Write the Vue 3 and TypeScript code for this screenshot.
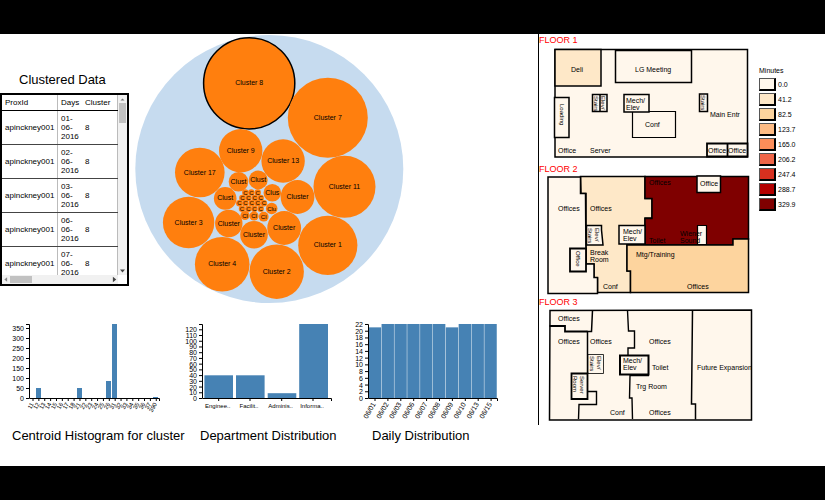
<script setup lang="ts">
interface Bubble { x: number; y: number; r: number; label: string; active?: boolean }
interface Tick { at: number; label: string }
interface Bar { x: number; y: number; w: number }
interface Chart {
  title: string
  key: string
  box: string
  x0: number
  x1: number
  yTicks: Tick[]
  xTicks: Tick[]
  bars: Bar[]
  tilt: boolean
}
interface Shape { d: string; fill: string; w: number }
interface Label { x: number; y: number; text: string; vertical?: boolean }
interface Floor { name: string; box: string; shapes: Shape[]; labels: Label[] }

const days = ['01', '02', '03', '06', '07']

const bubbles: Bubble[] = [
  { x: 249.2, y: 83.3, r: 45.6, label: 'Cluster 8', active: true },
  { x: 327.8, y: 117.8, r: 40, label: 'Cluster 7' },
  { x: 240.7, y: 150.7, r: 21.7, label: 'Cluster 9' },
  { x: 283.1, y: 161, r: 21.7, label: 'Cluster 13' },
  { x: 199.8, y: 172.5, r: 24.8, label: 'Cluster 17' },
  { x: 344.5, y: 186.8, r: 31, label: 'Cluster 11' },
  { x: 327.8, y: 245.3, r: 29.6, label: 'Cluster 1' },
  { x: 276.7, y: 271.7, r: 27.2, label: 'Cluster 2' },
  { x: 222.2, y: 264.3, r: 27.3, label: 'Cluster 4' },
  { x: 188.6, y: 222.5, r: 25.7, label: 'Cluster 3' },
  { x: 225.2, y: 198.4, r: 11.3, label: 'Clust' },
  { x: 238.5, y: 181.8, r: 9.8, label: 'Clust' },
  { x: 258.2, y: 179.9, r: 9.5, label: 'Clust' },
  { x: 272.3, y: 192.8, r: 8.8, label: 'Clus' },
  { x: 297.5, y: 197, r: 16.9, label: 'Cluster' },
  { x: 284.2, y: 228, r: 16.9, label: 'Cluster' },
  { x: 254, y: 234.8, r: 13.8, label: 'Cluster' },
  { x: 228.8, y: 223.5, r: 13.7, label: 'Cluster' },
  { x: 271.7, y: 208.5, r: 5.8, label: 'Clu' },
  { x: 245, y: 215.5, r: 4.6, label: 'Cl' },
  { x: 254, y: 216, r: 4.6, label: 'Cl' },
  { x: 263.7, y: 216.7, r: 4.9, label: 'Cl' },
  ...[245.3, 251.3, 257.7].map((x) => ({ x, y: 192.5, r: 3.2, label: 'C' })),
  ...[242.3, 248.3, 254.7, 260.7].map((x) => ({ x, y: 198, r: 3.2, label: 'C' })),
  ...[239.3, 245.3, 251.7, 257.7, 264].map((x) => ({ x, y: 203.2, r: 3.2, label: 'C' })),
  ...[242, 248.3, 254.3, 260.7].map((x) => ({ x, y: 208.7, r: 3.2, label: 'C' })),
]

const base = 398
const range = (max: number, step: number, unit: number): Tick[] =>
  Array.from({ length: max / step + 1 }, (_, i) => ({ at: base - i * step * unit, label: String(i * step) }))

const centroids = ['11', '12', '13', '14', '15', '16', '17', '18', '21', '22', '23', '24', '25', '26', '31', '32', '33', '34', '35', '36', '37', '390']
const dates = ['06/01', '06/02', '06/03', '06/06', '06/07', '06/08', '06/09', '06/10', '06/13', '06/15']
const counts = [21, 22, 22, 22, 22, 22, 21, 22, 22, 22]

const charts: Chart[] = [
  {
    title: 'Centroid Histogram for cluster',
    key: 'centroid',
    box: '0 315 188 107',
    x0: 29,
    x1: 159,
    yTicks: range(350, 50, 0.2),
    xTicks: centroids.map((label, i) => ({ at: 33 + i * 5.87, label })),
    bars: [
      { x: 36, y: 388, w: 5 },
      { x: 77, y: 388, w: 5 },
      { x: 106, y: 381, w: 5 },
      { x: 112, y: 324, w: 5 },
      { x: 153, y: 397, w: 5 },
    ],
    tilt: true,
  },
  {
    title: 'Department Distribution',
    key: 'department',
    box: '188 315 160 107',
    x0: 202,
    x1: 331,
    yTicks: range(120, 10, 0.5725),
    xTicks: [
      { at: 218.7, label: 'Enginee..' },
      { at: 250, label: 'Facilit..' },
      { at: 281.7, label: 'Adminis..' },
      { at: 313, label: 'Informa..' },
    ],
    bars: [
      { x: 204.4, y: 375.3, w: 28.6 },
      { x: 236, y: 375.3, w: 28.6 },
      { x: 267.7, y: 393.2, w: 28.6 },
      { x: 299.2, y: 324, w: 28.8 },
    ],
    tilt: false,
  },
  {
    title: 'Daily Distribution',
    key: 'daily',
    box: '348 315 190 107',
    x0: 368,
    x1: 497,
    yTicks: range(22, 2, 3.364),
    xTicks: dates.map((label, i) => ({ at: 375 + i * 12.9, label })),
    bars: counts.map((c, i) => ({ x: 368.7 + i * 12.85, y: base - c * 3.364, w: 12.4 })),
    tilt: true,
  },
]

const cream = '#fff7ec'
const sand = '#fee8c8'
const peach = '#fdd49e'
const maroon = '#7f0000'

const floors: Floor[] = [
  {
    name: 'FLOOR 1',
    box: '538 46 220 117',
    shapes: [
      { d: 'M555 49.5H747.5V157H555Z', fill: cream, w: 1.5 },
      { d: 'M555 49.5H601V86H555Z', fill: sand, w: 1.5 },
      { d: 'M615.5 50.5H691.5V82.5H615.5Z', fill: cream, w: 1.5 },
      { d: 'M554.5 97.5H569V137.5H554.5Z', fill: cream, w: 1.5 },
      { d: 'M592.5 94.5H607V111.5H592.5ZM600 94.5V111.5', fill: cream, w: 1.5 },
      { d: 'M632.5 111.5H675.5V137.5H632.5Z', fill: cream, w: 1.2 },
      { d: 'M624 94.5H649V112H624Z', fill: cream, w: 1.5 },
      { d: 'M699.5 94H707.5V111.5H699.5Z', fill: cream, w: 1.5 },
      { d: 'M707 143.5H747.5V156.5H707ZM727.5 143.5V156.5', fill: cream, w: 1.8 },
    ],
    labels: [
      { x: 571, y: 72, text: 'Deli' },
      { x: 635, y: 72, text: 'LG Meeting' },
      { x: 560, y: 104, text: 'Loading', vertical: true },
      { x: 601, y: 96, text: 'Elev/', vertical: true },
      { x: 594, y: 96, text: 'Stairs', vertical: true },
      { x: 626, y: 103, text: 'Mech/' },
      { x: 626, y: 110, text: 'Elev' },
      { x: 645, y: 127, text: 'Conf' },
      { x: 701, y: 95, text: 'Stairs', vertical: true },
      { x: 710, y: 117, text: 'Main Entr' },
      { x: 558, y: 153, text: 'Office' },
      { x: 590, y: 153, text: 'Server' },
      { x: 708, y: 153, text: 'Office' },
      { x: 728, y: 153, text: 'Office' },
    ],
  },
  {
    name: 'FLOOR 2',
    box: '538 175 220 121',
    shapes: [
      { d: 'M580.5 176.5H645V198.5H652V218H645V244.5H627V271H630.5V292.5H597.5V278H594V264H586V193.5H581Z', fill: sand, w: 1.5 },
      { d: 'M586 264H594V277.5H597.5V293.5H548V177H580.5V193.5H585.5Z', fill: cream, w: 1.5 },
      { d: 'M645 176.5H748.5V239H733V245H645V218.5H652V198.5H645Z', fill: maroon, w: 1.5 },
      { d: 'M627 245H733V239H748.5V292.5H630.5V271H627Z', fill: peach, w: 1.5 },
      { d: 'M697 176H720.5V192.5H697Z', fill: cream, w: 1.5 },
      { d: 'M697.5 225.5H706.5V244.5H697.5Z', fill: cream, w: 1.2 },
      { d: 'M586.5 225.5H601.5V230L603 245H586.5Z', fill: cream, w: 1.5 },
      { d: 'M619 225.5H645V244H619Z', fill: cream, w: 1.5 },
      { d: 'M570 248.5H586V271.5H570Z', fill: cream, w: 1.8 },
    ],
    labels: [
      { x: 558, y: 211, text: 'Offices' },
      { x: 590, y: 211, text: 'Offices' },
      { x: 649, y: 185, text: 'Offices' },
      { x: 700, y: 186, text: 'Office' },
      { x: 595, y: 228, text: 'Elev/', vertical: true },
      { x: 588, y: 228, text: 'Stairs', vertical: true },
      { x: 623, y: 234, text: 'Mech/' },
      { x: 623, y: 241, text: 'Elev' },
      { x: 649, y: 243, text: 'Toilet' },
      { x: 680, y: 236, text: 'Wiener' },
      { x: 680, y: 243, text: 'Sound' },
      { x: 576, y: 251, text: 'Office', vertical: true },
      { x: 590, y: 255, text: 'Break' },
      { x: 590, y: 262, text: 'Room' },
      { x: 636, y: 257, text: 'Mtg/Training' },
      { x: 603, y: 289, text: 'Conf' },
      { x: 687, y: 289, text: 'Offices' },
    ],
  },
  {
    name: 'FLOOR 3',
    box: '538 308 220 117',
    shapes: [
      { d: 'M550 310.5L751.5 310V420H549.5Z', fill: cream, w: 1.5 },
      { d: 'M549.5 326H565V331.5H587.5', fill: 'none', w: 1.8 },
      { d: 'M592.5 310.5L591.5 331.5H587.5V373', fill: 'none', w: 1.5 },
      { d: 'M627.5 310.5L628.5 331H634.5V348H628V355', fill: 'none', w: 1.4 },
      { d: 'M588 354.5H603.5V373.5H588Z', fill: cream, w: 0.8 },
      { d: 'M571.5 373.5H587.5V399H571.5Z', fill: cream, w: 1.8 },
      { d: 'M587.5 391.5H596.5V404.5H579L578.5 419', fill: 'none', w: 1.4 },
      { d: 'M649 375.5H630L629.5 398H632L632.5 419', fill: 'none', w: 1.4 },
      { d: 'M620 355.5H648.5V374.5H620Z', fill: cream, w: 2 },
      { d: 'M692.5 310.5L691.5 404H695.5V419.5', fill: 'none', w: 1.5 },
    ],
    labels: [
      { x: 558, y: 321, text: 'Offices' },
      { x: 558, y: 344, text: 'Offices' },
      { x: 590, y: 344, text: 'Offices' },
      { x: 649, y: 344, text: 'Offices' },
      { x: 597, y: 356, text: 'Elev/', vertical: true },
      { x: 590, y: 356, text: 'Stairs', vertical: true },
      { x: 623, y: 363, text: 'Mech/' },
      { x: 623, y: 370, text: 'Elev' },
      { x: 652, y: 370, text: 'Toilet' },
      { x: 697, y: 370, text: 'Future Expansion' },
      { x: 580, y: 376, text: 'Server', vertical: true },
      { x: 573, y: 376, text: 'Room', vertical: true },
      { x: 636, y: 389, text: 'Trg Room' },
      { x: 610, y: 415, text: 'Conf' },
      { x: 649, y: 415, text: 'Offices' },
    ],
  },
]

const legend = [
  { color: '#fff7ec', value: '0.0' },
  { color: '#fee8c8', value: '41.2' },
  { color: '#fdd49e', value: '82.5' },
  { color: '#fdbb84', value: '123.7' },
  { color: '#fc8d59', value: '165.0' },
  { color: '#ef6548', value: '206.2' },
  { color: '#d7301f', value: '247.4' },
  { color: '#b30000', value: '288.7' },
  { color: '#7f0000', value: '329.9' },
]
</script>

<template>
  <div class="frame">
    <main class="board">
      <section class="left">
        <div class="overview">
          <div class="records">
            <h2>Clustered Data</h2>
            <div class="scroller">
              <div class="viewport">
                <table>
                  <thead>
                    <tr><th class="prox">ProxId</th><th class="day">Days</th><th class="cluster">Cluster</th></tr>
                  </thead>
                  <tbody>
                    <tr v-for="d in days" :key="d">
                      <td>apinckney001</td>
                      <td class="day">{{ d }}-<br>06-<br>2016</td>
                      <td>8</td>
                    </tr>
                  </tbody>
                </table>
              </div>
              <div class="vbar">
                <svg viewBox="0 0 9 6"><path d="M2.5 4.5 4.5 2.5 6.5 4.5Z" fill="#777" /></svg>
                <span class="vthumb"></span>
                <svg viewBox="0 0 9 6"><path d="M2 1.5H7L4.5 4.5Z" fill="#444" /></svg>
              </div>
              <div class="hbar">
                <svg viewBox="0 0 7 8"><path d="M4.5 2V6L2 4Z" fill="#888" /></svg>
                <span class="hthumb"></span>
                <svg viewBox="0 0 7 8"><path d="M2.5 1.5V6.5L5.5 4Z" fill="#444" /></svg>
              </div>
              <div class="corner"></div>
            </div>
          </div>
          <svg class="bubbles" viewBox="129 34 409 271" role="img">
            <circle cx="269.3" cy="169" r="134" fill="#c6dbef" />
            <g v-for="(b, i) in bubbles" :key="i">
              <circle :cx="b.x" :cy="b.y" :r="b.r" :class="['bubble', { active: b.active }]" />
              <text :class="{ small: b.r < 6 }" :x="b.x" :y="b.y + 2" text-anchor="middle">{{ b.label }}</text>
            </g>
          </svg>
        </div>

        <div class="charts">
          <figure v-for="c in charts" :key="c.key" :class="c.key">
            <svg :viewBox="c.box" role="img">
              <rect v-for="(b, i) in c.bars" :key="i" :x="b.x" :y="b.y" :width="b.w" :height="base - b.y" fill="#4682b4" />
              <path class="axis" :d="`M${c.x0 - 3} 324.5H${c.x0 + 0.5}V398.5H${c.x1 + 0.5}V401`" />
              <g v-for="t in c.yTicks" :key="'y' + t.label">
                <path class="axis" :d="`M${c.x0 - 3} ${t.at + 0.5}H${c.x0}`" />
                <text :x="c.x0 - 5" :y="t.at + 3" text-anchor="end">{{ t.label }}</text>
              </g>
              <g v-for="t in c.xTicks" :key="'x' + t.label">
                <path class="axis" :d="`M${t.at} 398V401`" />
                <text v-if="c.tilt" class="tilted" :transform="`translate(${t.at + 1} 404) rotate(-60)`" text-anchor="end">{{ t.label }}</text>
                <text v-else class="small" :x="t.at - 1" y="408" text-anchor="middle">{{ t.label }}</text>
              </g>
            </svg>
            <figcaption>{{ c.title }}</figcaption>
          </figure>
        </div>
      </section>

      <section class="right">
        <div class="floors">
          <article v-for="f in floors" :key="f.name">
            <h3>{{ f.name }}</h3>
            <svg :viewBox="f.box" role="img">
              <path v-for="(s, i) in f.shapes" :key="i" :d="s.d" :fill="s.fill" :stroke-width="s.w" stroke="#000" />
              <text
                v-for="(l, i) in f.labels"
                :key="'l' + i"
                :class="{ small: l.vertical }"
                :transform="`translate(${l.x} ${l.y})${l.vertical ? ' rotate(90)' : ''}`"
              >{{ l.text }}</text>
            </svg>
          </article>
        </div>
        <aside class="legend">
          <h4>Minutes</h4>
          <ul>
            <li v-for="s in legend" :key="s.value">
              <span class="swatch" :style="{ background: s.color }"></span>{{ s.value }}
            </li>
          </ul>
        </aside>
      </section>
    </main>
  </div>
</template>

<style>
body {
  margin: 0;
  background: #000;
}
</style>

<style scoped>
.frame {
  box-sizing: border-box;
  min-height: 100vh;
  padding: 34px 0;
  background: #000;
  color: #000;
  font-family: "Liberation Sans", Arial, sans-serif;
  font-size: 7px;
  display: flex;
}
.board {
  flex: 1;
  background: #fff;
  display: grid;
  grid-template-columns: minmax(0, 538fr) minmax(0, 287fr);
  align-items: start;
}
h2, h3, h4, figure, ul {
  margin: 0;
  padding: 0;
  font-weight: 400;
}
svg {
  display: block;
  width: 100%;
  overflow: visible;
}
text {
  font-size: 7px;
}
.overview {
  display: grid;
  grid-template-columns: minmax(0, 129fr) minmax(0, 409fr);
  margin-bottom: 10px;
}
.records {
  padding-top: 38px;
}
h2 {
  font-size: 13px;
  line-height: 16px;
  margin-bottom: 5px;
  padding-left: 19px;
  white-space: nowrap;
}
.scroller {
  display: grid;
  grid-template-columns: minmax(0, 1fr) 9px;
  grid-template-rows: 180px 9px;
  border: 2px solid #000;
}
.viewport {
  overflow: hidden;
}
table {
  border-collapse: collapse;
  table-layout: fixed;
  width: 100%;
  font-size: 8px;
  line-height: 9px;
}
th, td {
  padding: 3px 0 3px 3px;
  text-align: left;
  font-weight: 400;
  border-bottom: 1px solid #444;
}
th {
  border-color: #000;
}
.prox {
  width: 52px;
}
.day {
  border-left: 1px solid #bbb;
}
th.day {
  width: 21px;
}
tr > :last-child {
  border-right: 1px solid #bbb;
}
.vbar, .hbar {
  display: flex;
  background: #f1f1f1;
  justify-content: space-between;
}
.vbar {
  flex-direction: column;
}
.vbar svg {
  height: 8px;
}
.vthumb {
  height: 20px;
  margin: 0 1px auto;
  background: #c1c1c1;
}
.hbar svg {
  width: 8px;
}
.hthumb {
  width: 22px;
  margin: 1px auto 1px 0;
  background: #c1c1c1;
}
.bubble {
  fill: #ff7f0e;
}
.active {
  stroke: #000;
  stroke-width: 1.5px;
}
.charts {
  display: grid;
  grid-template-columns: minmax(0, 188fr) minmax(0, 160fr) minmax(0, 190fr);
}
figcaption {
  font-size: 13px;
  line-height: 16px;
  padding: 6px 0 0 12px;
  white-space: nowrap;
}
.daily figcaption {
  padding-left: 24px;
}
.axis {
  fill: none;
  stroke: #000;
  stroke-width: 1px;
}
.small, .centroid .tilted {
  font-size: 6px;
}
.right {
  display: grid;
  grid-template-columns: minmax(0, 220fr) minmax(0, 67fr);
  align-items: start;
}
.floors {
  box-shadow: inset 1px 0 #000;
}
h3 {
  color: #f00;
  font-size: 9px;
  line-height: 12px;
  padding-left: 1px;
}
.legend {
  padding: 33px 0 0 1px;
}
h4 {
  font-size: 7px;
  line-height: 8px;
  margin-bottom: 2px;
}
ul {
  list-style: none;
}
li {
  display: flex;
  align-items: center;
  gap: 2px;
  height: 15px;
  line-height: 8px;
}
.swatch {
  box-sizing: border-box;
  width: 17px;
  height: 13px;
  border: solid #000;
  border-width: 1px 2px 2px 1px;
  border-color: #555 #000 #000 #555;
}
</style>
